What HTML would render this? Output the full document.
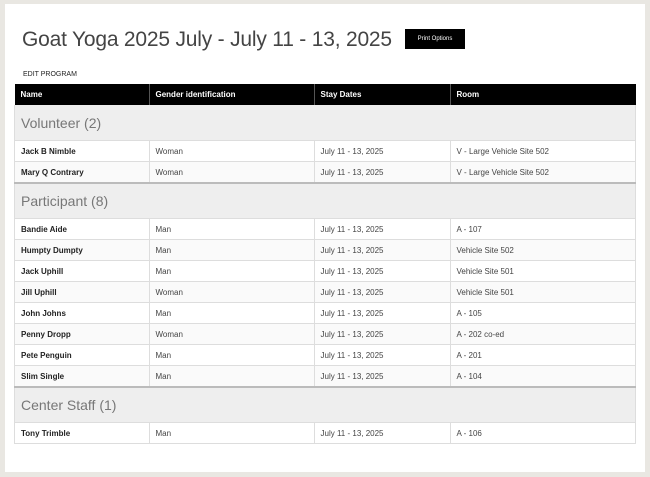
<!DOCTYPE html>
<html><head><style>
body{margin:0;width:650px;height:477px;background:#e9e7e2;font-family:"Liberation Sans",Arial,sans-serif;overflow:hidden}
.panel{position:absolute;left:5px;top:4px;width:640px;height:468px;background:#fff}
h1{position:absolute;left:17px;top:24px;margin:0;font-weight:normal;font-size:21px;color:#444;letter-spacing:-0.2px;white-space:nowrap}
.btn{position:absolute;left:400px;top:25px;width:60px;height:20px;background:#000;color:#fff;font-size:6px;line-height:20px;text-align:center}
.edit{position:absolute;left:18px;top:67px;font-size:7px;color:#222}
table{position:absolute;left:9px;top:80px;width:622px;border-collapse:collapse;font-size:8px}
th{background:#000;color:#fff;text-align:left;font-weight:bold;height:21px;padding:0 6px;border-left:1px solid #555}
th:first-child{border-left:none}
td{height:20px;padding:0 6px;border:1px solid #ddd;color:#444}
td:first-child{font-weight:bold;color:#222}
tr.g td{background:#eee;height:34px;font-size:14px;color:#777;font-weight:normal;border-top:2px solid #bbb}
tr.g.first td{border-top:none;height:35px}
</style></head><body>
<div class="panel">
<h1>Goat Yoga 2025 July - July 11 - 13, 2025</h1>
<div class="btn">Print Options</div>
<div class="edit">EDIT PROGRAM</div>
<table>
<tr><th style="width:122px">Name</th><th style="width:152px">Gender identification</th><th style="width:123px">Stay Dates</th><th>Room</th></tr>
<tr class="g first"><td colspan="4">Volunteer (2)</td></tr>
<tr><td>Jack B Nimble</td><td>Woman</td><td>July 11 - 13, 2025</td><td>V - Large Vehicle Site 502</td></tr>
<tr style="background:#fafafa"><td>Mary Q Contrary</td><td>Woman</td><td>July 11 - 13, 2025</td><td>V - Large Vehicle Site 502</td></tr>
<tr class="g"><td colspan="4">Participant (8)</td></tr>
<tr><td>Bandie Aide</td><td>Man</td><td>July 11 - 13, 2025</td><td>A - 107</td></tr>
<tr style="background:#fafafa"><td>Humpty Dumpty</td><td>Man</td><td>July 11 - 13, 2025</td><td>Vehicle Site 502</td></tr>
<tr><td>Jack Uphill</td><td>Man</td><td>July 11 - 13, 2025</td><td>Vehicle Site 501</td></tr>
<tr style="background:#fafafa"><td>Jill Uphill</td><td>Woman</td><td>July 11 - 13, 2025</td><td>Vehicle Site 501</td></tr>
<tr><td>John Johns</td><td>Man</td><td>July 11 - 13, 2025</td><td>A - 105</td></tr>
<tr style="background:#fafafa"><td>Penny Dropp</td><td>Woman</td><td>July 11 - 13, 2025</td><td>A - 202 co-ed</td></tr>
<tr><td>Pete Penguin</td><td>Man</td><td>July 11 - 13, 2025</td><td>A - 201</td></tr>
<tr style="background:#fafafa"><td>Slim Single</td><td>Man</td><td>July 11 - 13, 2025</td><td>A - 104</td></tr>
<tr class="g"><td colspan="4">Center Staff (1)</td></tr>
<tr><td>Tony Trimble</td><td>Man</td><td>July 11 - 13, 2025</td><td>A - 106</td></tr>
</table>
</div>
</body></html>
